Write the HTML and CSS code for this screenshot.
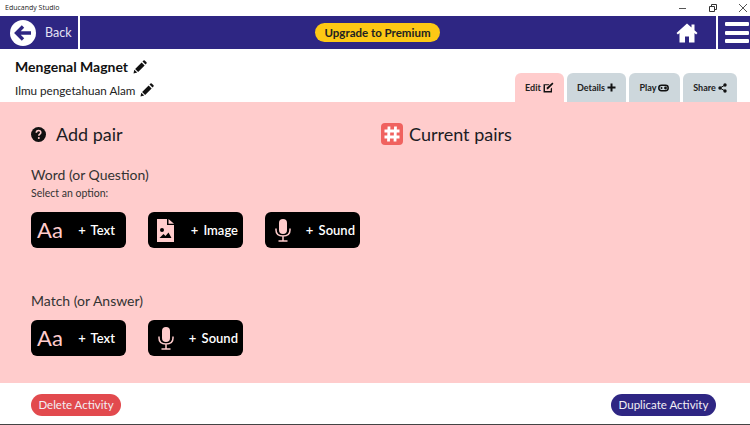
FILE: index.html
```html
<!DOCTYPE html>
<html lang="en">

<head>
  <meta charset="UTF-8" />
  <title>Educandy Studio</title>
  <link rel="stylesheet" href="styles.css">
</head>

<body>
  <div class="titlebar">
    <span class="app-name">Educandy Studio</span>
    <div class="win-controls">
      <svg width="10" height="10" viewBox="0 0 10 10"><path d="M1 5.500h7" stroke="#555" fill="none" /></svg>
      <svg width="10" height="10" viewBox="0 0 10 10"><path d="M1.500 3.500h5v5h-5zM3.500 3.500v-2h5v5h-2" stroke="#333" fill="none" /></svg>
      <svg width="10" height="10" viewBox="0 0 10 10"><path d="M1 1l8 8M9 1l-8 8" stroke="#555" fill="none" /></svg>
    </div>
  </div>

  <div class="navbar">
    <div class="back">
      <svg class="back-icon" width="26" height="26" viewBox="0 0 26 26">
        <circle cx="13" cy="13" r="13" fill="#fff" />
        <path d="M21 13H8M13 6.500L6.500 13l6.500 6.500" stroke="#2e2683" stroke-width="3.400" fill="none" />
      </svg>
      <span>Back</span>
    </div>
    <div class="nav-center">
      <span class="upgrade">Upgrade to Premium</span>
    </div>
    <svg class="home-icon" width="22" height="20" viewBox="0 0 22 20">
      <path d="M11 0.500L0.500 10l1.400 1.500L3.500 10v9.500h5.500v-6h4v6h5.500V10l1.600 1.500 1.400-1.500-3-2.800V1.500h-3v2.900z" fill="#fff" />
    </svg>
    <div class="menu">
      <i></i><i></i><i></i>
    </div>
  </div>

  <div class="head">
    <div class="titles">
      <div class="title">Mengenal Magnet
        <svg class="pencil" width="14" height="14" viewBox="0 0 14 14"><use href="#pencil" /></svg>
      </div>
      <div class="subtitle">Ilmu pengetahuan Alam
        <svg class="pencil" width="14" height="14" viewBox="0 0 14 14"><use href="#pencil" /></svg>
      </div>
    </div>
    <div class="tabs">
      <div class="tab active">Edit
        <svg width="11" height="11" viewBox="0 0 10 10"><path d="M0.500 2h5.500L5 3H1.800v5.200H7V6.200l1.200-1.200v4.500H0.500z" fill="#111" /><path d="M3.500 5L8.500 0.500l1 1L4.500 6.500 3.300 6.700z" fill="#111" /></svg>
      </div>
      <div class="tab">Details
        <svg width="9" height="9" viewBox="0 0 9 9"><path d="M4.500 0.500v8M0.500 4.500h8" stroke="#111" stroke-width="2" /></svg>
      </div>
      <div class="tab">Play
        <svg width="11" height="8" viewBox="0 0 11 8"><rect x="0.800" y="1.300" width="9.400" height="5.400" rx="2.700" fill="none" stroke="#111" stroke-width="1.500" /><circle cx="7.500" cy="4" r="1.400" fill="#111" /><circle cx="3.500" cy="4" r="1" fill="#111" /></svg>
      </div>
      <div class="tab">Share
        <svg width="9" height="10" viewBox="0 0 9 10"><circle cx="7" cy="2" r="1.700" fill="#111" /><circle cx="2" cy="5" r="1.700" fill="#111" /><circle cx="7" cy="8" r="1.700" fill="#111" /><path d="M7 2L2 5l5 3" stroke="#111" fill="none" /></svg>
      </div>
    </div>
  </div>

  <div class="main">
    <div class="col-left">
      <div class="section-head">
        <svg width="15" height="15" viewBox="0 0 15 15">
          <circle cx="7.500" cy="7.500" r="7.500" fill="#111" />
          <path d="M5.300 5.800c0-3 4.500-3 4.500-.3 0 1.600-2 1.600-2 3.200" stroke="#ffcccc" stroke-width="1.600" fill="none" />
          <circle cx="7.800" cy="11" r="1" fill="#ffcccc" />
        </svg>
        <h2>Add pair</h2>
      </div>

      <div class="label word-label">Word (or Question)</div>
      <div class="hint">Select an option:</div>
      <div class="options">
        <div class="option"><span class="aa">Aa</span><span>+ Text</span></div>
        <div class="option">
          <svg width="17" height="23" viewBox="0 0 17 23"><path d="M0 0h10v6h7v17H0zM11.500 0L17 4.800h-5.500z" fill="#ffcccc" fill-rule="evenodd" /><circle cx="5" cy="11" r="2" fill="#000" /><path d="M2.500 19l4-4 2 2 3-3.500 3 5.500z" fill="#000" /></svg>
          <span>+ Image</span>
        </div>
        <div class="option">
          <svg width="18" height="23" viewBox="0 0 18 23"><use href="#mic" /></svg>
          <span>+ Sound</span>
        </div>
      </div>

      <div class="label match-label">Match (or Answer)</div>
      <div class="options">
        <div class="option"><span class="aa">Aa</span><span>+ Text</span></div>
        <div class="option">
          <svg width="18" height="23" viewBox="0 0 18 23"><use href="#mic" /></svg>
          <span>+ Sound</span>
        </div>
      </div>
    </div>

    <div class="col-right">
      <div class="section-head">
        <svg width="22" height="22" viewBox="0 0 22 22">
          <rect width="22" height="22" rx="4" fill="#f0625f" />
          <path d="M8 3.500l-.5 15M14.500 3.500l-.5 15M3.500 8h15M3.500 14h15" stroke="#fff" stroke-width="2.800" />
        </svg>
        <h2>Current pairs</h2>
      </div>
    </div>
  </div>

  <div class="footer">
    <span class="pill delete">Delete Activity</span>
    <span class="pill duplicate">Duplicate Activity</span>
  </div>

  <svg width="0" height="0" class="defs">
    <defs>
      <g id="pencil">
        <path d="M0.500 13.500l0.800-3.800 2.900 2.900z" fill="#111" />
        <path d="M2.100 8.900L8.600 2.400l3 3-6.500 6.500z" fill="#111" />
        <path d="M9.500 1.500l1-1q.6-.5 1.200 0l1.800 1.800q.5.600 0 1.200l-1 1z" fill="#111" />
      </g>
      <g id="mic">
        <rect x="5" y="0" width="8" height="15" rx="4" fill="#ffcccc" />
        <path d="M2 9.500v1.500c0 4 3 6 7 6s7-2 7-6V9.500M9 17v4.500M4.500 22h9" stroke="#ffcccc" stroke-width="1.500" fill="none" />
      </g>
    </defs>
  </svg>
</body>

</html>
```
FILE: styles.css
```css
body {
  font-family: Lato, "Noto Sans", sans-serif;
  margin: 0;
  padding: 0;
  width: 750px;
  height: 425px;
  display: flex;
  flex-direction: column;
  background-color: #fff;
  color: #222;
  overflow: hidden;
}

.defs {
  display: none;
}

.titlebar {
  height: 15px;
  display: flex;
  align-items: center;
  justify-content: space-between;
}

.app-name {
  font-family: "Open Sans", sans-serif;
  font-size: 7px;
  padding-left: 5px;
  color: #222;
}

.win-controls {
  display: flex;
  gap: 20px;
  padding-right: 2px;
}

.navbar {
  height: 33px;
  margin-top: 1px;
  background-color: #2e2683;
  display: flex;
  align-items: center;
  color: #fff;
}

.back {
  width: 80px;
  height: 100%;
  box-sizing: border-box;
  padding-left: 10px;
  display: flex;
  align-items: center;
  gap: 9px;
  border-right: 2px solid #fff;
  font-size: 12.500px;
  color: #e4e2f4;
}

.nav-center {
  flex: 1;
  display: flex;
  justify-content: center;
  padding-right: 1px;
}

.upgrade {
  background-color: #fdc814;
  color: #222;
  font-weight: bold;
  font-size: 11.500px;
  line-height: 19px;
  width: 125px;
  text-align: center;
  border-radius: 10px;
}

.home-icon {
  margin-right: 18px;
}

.menu {
  width: 34px;
  height: 100%;
  box-sizing: border-box;
  padding: 6px 1px 6px 7px;
  border-left: 2px solid #fff;
  display: flex;
  flex-direction: column;
  justify-content: space-between;
}

.menu i {
  display: block;
  height: 4px;
  background-color: #fff;
  border-radius: 1px;
}

.head {
  height: 53px;
  display: flex;
  justify-content: space-between;
  align-items: flex-end;
}

.titles {
  padding-left: 15px;
  align-self: flex-start;
}

.title {
  font-size: 14px;
  font-weight: bold;
  margin-top: 9px;
  display: flex;
  align-items: center;
  gap: 5px;
  color: #111;
}

.subtitle {
  font-size: 11.700px;
  margin-top: 8px;
  display: flex;
  align-items: center;
  gap: 5px;
  color: #222;
}

.tabs {
  display: flex;
  gap: 3px;
  padding-right: 13px;
}

.tab {
  height: 29px;
  width: 49px;
  box-sizing: border-box;
  display: flex;
  align-items: center;
  justify-content: center;
  gap: 2px;
  background-color: #cdd7dc;
  border-radius: 6px 6px 0 0;
  font-size: 9px;
  font-weight: bold;
  color: #222;
}

.tab:nth-child(2) {
  width: 59px;
}

.tab:nth-child(3) {
  width: 51px;
}

.tab:nth-child(4) {
  width: 54px;
}

.tab.active {
  background-color: #ffcccc;
}

.main {
  height: 281px;
  background-color: #ffcccc;
  display: flex;
  box-sizing: border-box;
  padding: 20px 0 0 31px;
}

.col-left {
  width: 350px;
}

.section-head {
  display: flex;
  align-items: center;
  height: 24px;
  gap: 10px;
}

.col-right .section-head {
  gap: 6px;
}

h2 {
  margin: 0;
  font-size: 18px;
  font-weight: normal;
  color: #1c1c24;
}

.label {
  font-size: 14px;
  color: #333;
}

.word-label {
  margin-top: 20px;
}

.match-label {
  margin-top: 44px;
}

.hint {
  font-size: 10.500px;
  margin-top: 4px;
  color: #333;
}

.options {
  display: flex;
  gap: 22px;
  margin-top: 13px;
}

.match-label + .options {
  margin-top: 11px;
}

.option {
  width: 95px;
  height: 36px;
  box-sizing: border-box;
  padding: 0 5px 0 9px;
  background-color: #000;
  border-radius: 6px;
  display: flex;
  align-items: center;
  justify-content: space-between;
  color: #fff;
  font-size: 13px;
  font-weight: 600;
  word-spacing: 2px;
}

.option:has(.aa) {
  padding: 0 11px 0 6px;
}

.aa {
  font-size: 22px;
  font-weight: normal;
  color: #ffcccc;
  padding-bottom: 2px;
}

.footer {
  flex: 1;
  display: flex;
  align-items: center;
  justify-content: space-between;
  padding: 2px 34px 0 31px;
  border-bottom: 1px solid #444;
}

.pill {
  height: 22px;
  line-height: 22px;
  border-radius: 11px;
  font-size: 11.500px;
  text-align: center;
  color: #f2eef4;
}

.delete {
  width: 90px;
  background-color: #e24a4e;
}

.duplicate {
  width: 105px;
  background-color: #2e2683;
}
```
